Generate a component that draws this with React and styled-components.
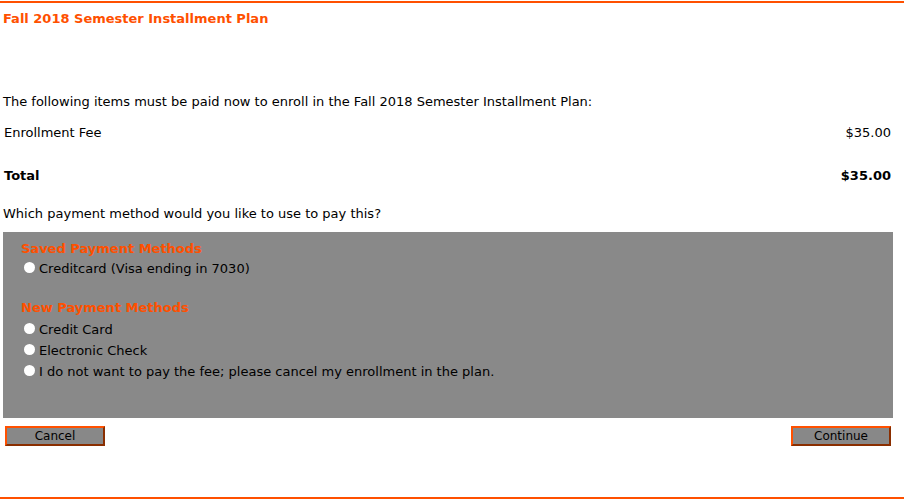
import React from "react";
import styled, { createGlobalStyle } from "styled-components";

const Global = createGlobalStyle`
  html, body { margin: 0; padding: 0; background: #fff; }
  body { font-family: "DejaVu Sans", Verdana, sans-serif; font-size: 13px; color: #000; }
`;

const Page = styled.div`
  width: 906px;
  height: 501px;
  box-sizing: border-box;
  padding-top: 1px;
  display: flex;
  flex-direction: column;
`;

const Rule = styled.div`
  height: 2px;
  background: #ff5000;
  margin: 0 2px 0 0;
`;

const Title = styled.h1`
  margin: 8px 0 0 3px;
  font-size: 13px;
  line-height: 16px;
  font-weight: bold;
  color: #ff5000;
`;

const Intro = styled.p`
  margin: 67px 0 0 3px;
  line-height: 16px;
`;

const Row = styled.div`
  display: flex;
  justify-content: space-between;
  margin: ${(p) => p.$top}px 15px 0 4px;
  line-height: 16px;
  font-weight: ${(p) => (p.$bold ? "bold" : "normal")};
`;

const Question = styled.p`
  margin: 22px 0 0 3px;
  line-height: 16px;
`;

const Panel = styled.div`
  margin: 10px 13px 0 3px;
  height: 186px;
  box-sizing: border-box;
  background: #898989;
  padding: 9px 0 0 18px;
  display: flex;
  flex-direction: column;
`;

const GroupTitle = styled.div`
  color: #ff5000;
  font-weight: bold;
  line-height: 16px;
  margin-top: ${(p) => p.$top}px;
`;

const Option = styled.label`
  display: flex;
  align-items: center;
  line-height: 16px;
  margin-top: ${(p) => p.$top}px;
  color: #000;
`;

const Radio = styled.span`
  width: 11px;
  height: 11px;
  border-radius: 50%;
  background: #fff;
  margin: 0 4px 4px 3px;
  flex: none;
`;

const Buttons = styled.div`
  display: flex;
  justify-content: space-between;
  margin: 8px 15px 0 5px;
`;

const Button = styled.button`
  width: 100px;
  height: 20px;
  box-sizing: border-box;
  background: #888888;
  border-style: solid;
  border-width: 2px;
  border-color: #ff5000 #8a2e00 #8a2e00 #ff5000;
  font-family: "DejaVu Sans", Verdana, sans-serif;
  font-size: 12px;
  color: #000;
  padding: 0;
  line-height: 16px;
`;

const Spacer = styled.div`
  flex: 1;
`;

const BottomRule = styled(Rule)`
  margin-bottom: 2px;
`;

export default function App() {
  return (
    <Page>
      <Global />
      <Rule />
      <Title>Fall 2018 Semester Installment Plan</Title>
      <Intro>The following items must be paid now to enroll in the Fall 2018 Semester Installment Plan:</Intro>
      <Row $top={15}>
        <span>Enrollment Fee</span>
        <span>$35.00</span>
      </Row>
      <Row $top={27} $bold>
        <span>Total</span>
        <span>$35.00</span>
      </Row>
      <Question>Which payment method would you like to use to pay this?</Question>
      <Panel>
        <GroupTitle $top={0}>Saved Payment Methods</GroupTitle>
        <Option $top={4}><Radio />Creditcard (Visa ending in 7030)</Option>
        <GroupTitle $top={23}>New Payment Methods</GroupTitle>
        <Option $top={6}><Radio />Credit Card</Option>
        <Option $top={5}><Radio />Electronic Check</Option>
        <Option $top={5}><Radio />I do not want to pay the fee; please cancel my enrollment in the plan.</Option>
      </Panel>
      <Buttons>
        <Button>Cancel</Button>
        <Button>Continue</Button>
      </Buttons>
      <Spacer />
      <BottomRule />
    </Page>
  );
}
